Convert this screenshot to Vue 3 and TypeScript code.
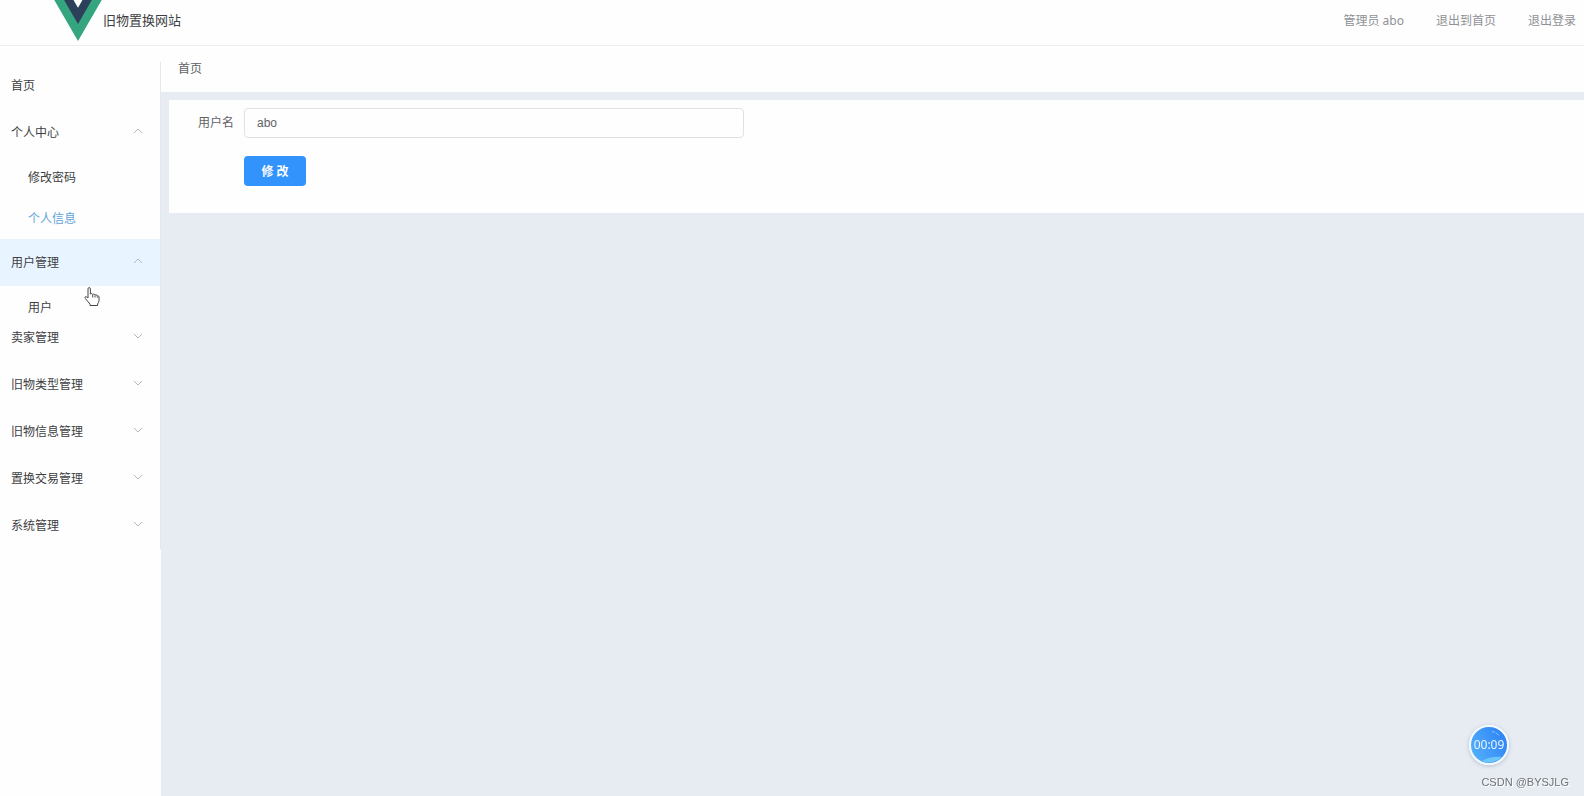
<script setup lang="ts">
import { ref } from 'vue'

interface MenuGroup {
  title: string
  open: boolean
  hovered?: boolean
  folding?: boolean
  children: string[]
}

const username = ref('abo')
const current = ref('个人信息')
const groups = ref<MenuGroup[]>([
  { title: '个人中心', open: true, children: ['修改密码', '个人信息'] },
  { title: '用户管理', open: true, hovered: true, folding: true, children: ['用户'] },
  { title: '卖家管理', open: false, children: [] },
  { title: '旧物类型管理', open: false, children: [] },
  { title: '旧物信息管理', open: false, children: [] },
  { title: '置换交易管理', open: false, children: [] },
  { title: '系统管理', open: false, children: [] },
])
</script>

<template>
  <div class="app">
    <header class="top">
      <svg class="logo" viewBox="0 10 256 211" aria-hidden="true">
        <path fill="#34a57e" d="M204.8 0H256L128 220.8 0 0h97.92L128 51.2 157.44 0z" />
        <path fill="#2c4059" d="M50.56 0L128 133.12 204.8 0h-47.36L128 51.2 97.92 0z" />
      </svg>
      <h1 class="title">旧物置换网站</h1>
      <nav class="actions">
        <span>管理员 abo</span>
        <a href="#">退出到首页</a>
        <a href="#">退出登录</a>
      </nav>
    </header>
    <div class="body">
      <aside class="side">
        <ul class="menu">
          <li><a class="row" href="#">首页</a></li>
          <li v-for="g in groups" :key="g.title">
            <button type="button" class="row" :class="{ hovered: g.hovered }" :aria-expanded="g.open" @click="g.open = !g.open">
              <span>{{ g.title }}</span>
              <svg class="chevron" viewBox="0 0 10 6" aria-hidden="true">
                <path :d="g.open ? 'M1 5L5 1L9 5' : 'M1 1L5 5L9 1'" />
              </svg>
            </button>
            <ul v-if="g.open" class="sub" :class="{ folding: g.folding }">
              <li v-for="c in g.children" :key="c">
                <a href="#" :class="{ active: c === current }">{{ c }}</a>
              </li>
            </ul>
          </li>
        </ul>
      </aside>
      <main class="main">
        <div class="crumb">首页</div>
        <form class="card" @submit.prevent>
          <label for="username">用户名</label>
          <input id="username" v-model="username" type="text" />
          <button type="submit">修 改</button>
        </form>
      </main>
    </div>
    <svg class="pointer" viewBox="0 0 16 20" aria-hidden="true">
      <path d="M4 1.8c0-1.6 2.4-1.6 2.4 0v5.4c.3-1 2.2-.8 2.3.4.5-.9 2.2-.6 2.3.6.6-.8 2.1-.4 2.3.8.8-.6 1.7 0 1.700 1v3.6c0 1.600-1 2.400-1.400 3.400v1.500H6v-1.300C4.600 15.500 3.400 13.800 1.400 11.500.2 9.800 1.800 8.600 4 11z" />
      <path d="M8.700 8v2.500M11 8.500v2M13.300 9.300v1.500" />
    </svg>
    <div class="timer">
      <svg viewBox="0 0 36 36" aria-hidden="true">
        <path d="M21 4.500q5 1 7 4" fill="none" stroke="#8cc8ff" stroke-dasharray="3 1 6" />
        <path d="M11 34q9-5 20-4a18 18 0 0 1-20 4z" fill="#6cc5fb" />
      </svg>
      <span>00:09</span>
    </div>
    <div class="credit">CSDN @BYSJLG</div>
  </div>
</template>

<style>
body {
  margin: 0;
}
</style>

<style scoped>
.app {
  display: flex;
  flex-direction: column;
  min-height: 100vh;
  background: #fefefe;
  color: #3d3f43;
  font: 12px/18px "Noto Sans", "Noto Sans CJK SC", sans-serif;
}
a {
  color: inherit;
  text-decoration: none;
}
ul {
  list-style: none;
  margin: 0;
  padding: 0;
}
.top {
  display: flex;
  align-items: flex-start;
  height: 45px;
  padding: 0 8px 0 53px;
  border-bottom: 1px solid #ebedf0;
}
.logo {
  width: 50px;
  height: 41px;
}
.title {
  margin: 0;
  font-size: 13px;
  font-weight: 400;
  line-height: 41px;
}
.actions {
  display: flex;
  gap: 32px;
  margin-left: auto;
  line-height: 41px;
  color: #8e9196;
}
.body {
  display: flex;
  flex: 1;
}
.side {
  flex: 0 0 161px;
  padding-top: 16px;
}
.menu {
  border-right: 1px solid #e6e8ec;
}
.row {
  display: flex;
  align-items: center;
  justify-content: space-between;
  box-sizing: border-box;
  width: 100%;
  height: 47px;
  padding: 0 17px 0 11px;
  border: 0;
  background: none;
  font: inherit;
  color: inherit;
  text-align: left;
}
.row.hovered {
  background: #e8f4ff;
}
.chevron {
  width: 10px;
  height: 6px;
  margin-bottom: 3px;
  fill: none;
  stroke: #b4b7bc;
}
.sub {
  padding-top: 1px;
}
.sub a {
  display: block;
  padding-left: 28px;
  line-height: 41px;
}
.sub .active {
  color: #5fa5dc;
}
.sub.folding {
  height: 27px;
}
.main {
  flex: 1;
  background: #e7ecf3;
}
.crumb {
  padding: 0 17px;
  line-height: 46px;
  background: #fefefe;
  color: #606266;
}
.card {
  display: grid;
  grid-template-columns: 65px minmax(0, 500px);
  column-gap: 10px;
  row-gap: 18px;
  align-items: center;
  margin: 8px 0 0 8px;
  padding: 8px 0 27px;
  background: #fefefe;
}
.card label {
  text-align: right;
  color: #606266;
}
.card input {
  box-sizing: border-box;
  width: 100%;
  height: 30px;
  padding: 0 12px;
  border: 1px solid #dfe1e6;
  border-radius: 4px;
  background: #fefefe;
  color: #606266;
  font: 12px "Liberation Sans", sans-serif;
}
.card button {
  grid-column: 2;
  justify-self: start;
  width: 62px;
  height: 30px;
  padding: 0;
  border: 0;
  border-radius: 4px;
  background: #3193fb;
  color: #fff;
  font: 700 12px "Noto Sans", "Noto Sans CJK SC", sans-serif;
}
.pointer {
  position: absolute;
  left: 84px;
  top: 287px;
  width: 16px;
  height: 20px;
  fill: #fff;
  stroke: #44464a;
}
.timer {
  position: fixed;
  right: 75px;
  bottom: 31px;
  display: grid;
  place-items: center;
  box-sizing: border-box;
  width: 40px;
  height: 40px;
  border: 2px solid #f3f9ff;
  border-radius: 50%;
  background: linear-gradient(60deg, #57b5fb, #2a7df5);
  box-shadow: 0 1px 4px #b5bfcc;
  color: #e8f5ff;
}
.timer > * {
  grid-area: 1 / 1;
}
.timer svg {
  width: 36px;
  height: 36px;
}
.credit {
  position: fixed;
  right: 15px;
  bottom: 5px;
  color: #6d7177;
  font: 11px/18px "Liberation Sans", sans-serif;
  text-shadow: 1px 1px #fff;
}
</style>
